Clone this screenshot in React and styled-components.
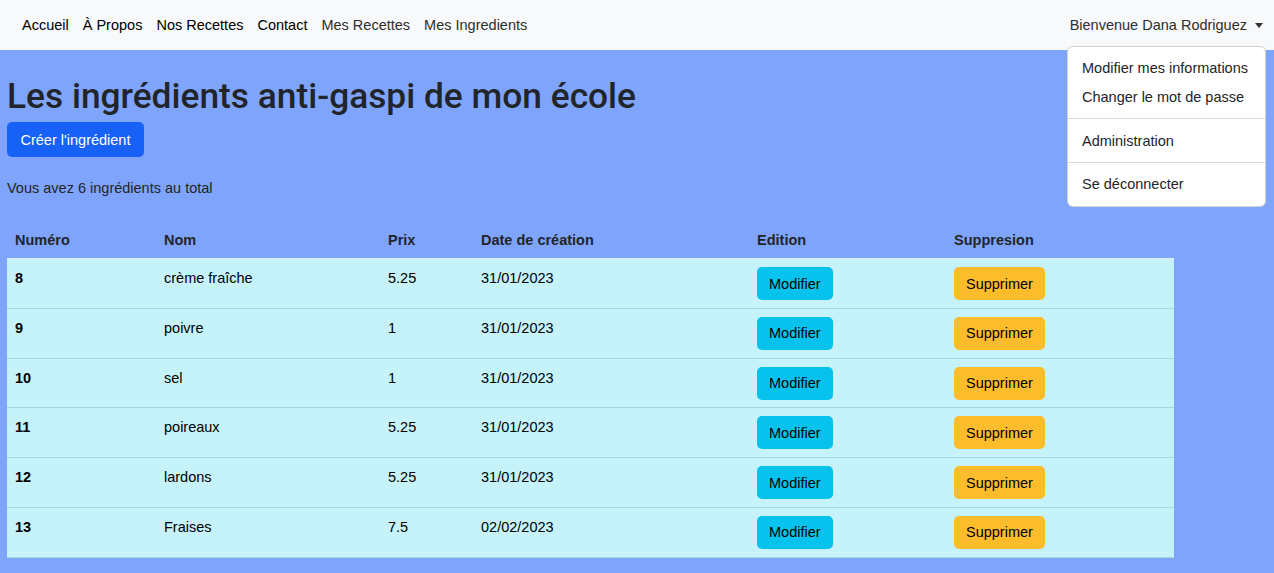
import React from "react";
import styled, { createGlobalStyle } from "styled-components";

const Global = createGlobalStyle`
  html, body { margin: 0; padding: 0; }
  body {
    background: #7fa4fc;
    font-family: "Liberation Sans", Arial, sans-serif;
    color: #212529;
    font-size: 15px;
  }
  * { box-sizing: border-box; }
`;

const NavBar = styled.nav`
  height: 50px;
  background: #f8f9fa;
  display: flex;
  align-items: center;
  justify-content: space-between;
  padding: 0 11px 0 15px;
  position: relative;
`;

const NavList = styled.div`
  display: flex;
  align-items: center;
`;

const NavLink = styled.a`
  padding: 0 7px;
  font-size: 14.5px;
  color: ${(p) => (p.$muted ? "#2e2e2e" : "#000")};
  text-decoration: none;
  white-space: nowrap;
`;

const UserToggle = styled.div`
  display: flex;
  align-items: center;
  gap: 8px;
  font-size: 14.5px;
  color: #2e2e2e;
`;

const Caret = styled.span`
  width: 0;
  height: 0;
  border-left: 4.5px solid transparent;
  border-right: 4.5px solid transparent;
  border-top: 5px solid #333;
`;

const Menu = styled.div`
  position: absolute;
  top: 46px;
  right: 8px;
  width: 199px;
  background: #fff;
  border: 1px solid rgba(0,0,0,0.175);
  border-radius: 6px;
  padding: 7px 0;
  z-index: 10;
`;

const MenuItem = styled.div`
  padding: 6px 14px;
  font-size: 14.5px;
  color: #212529;
  line-height: 17px;
  white-space: nowrap;
`;

const Divider = styled.hr`
  margin: 6px 0 7.5px;
  border: 0;
  border-top: 1px solid rgba(0,0,0,0.15);
`;

const Main = styled.main`
  padding: 0 7px;
`;

const Title = styled.h1`
  margin: 23px 0 0;
  font-family: Roboto, "Liberation Sans", sans-serif;
  font-size: 35.3px;
  font-weight: 500;
  line-height: 46px;
  color: #212529;
`;

const PrimaryButton = styled.button`
  margin-top: 3px;
  height: 35px;
  padding: 0 13.5px;
  background: #1761f6;
  border: none;
  border-radius: 5px;
  color: #fff;
  font-family: inherit;
  font-size: 14.5px;
`;

const Count = styled.p`
  margin: 23px 0 0;
  font-size: 14.5px;
  line-height: 17px;
`;

const Table = styled.table`
  margin-top: 26px;
  width: 1167px;
  border-collapse: collapse;
  font-size: 14.5px;
`;

const Th = styled.th`
  text-align: left;
  font-weight: 700;
  padding: 8px 8px 9px;
  line-height: 18px;
  width: ${(p) => p.$w}px;
  color: #212529;
`;

const Row = styled.tr`
  background: #c6f2fa;
  border-top: 1px solid ${(p) => (p.$first ? "#e8eef6" : "#a9d7e0")};
  &:last-child { border-bottom: 1px solid #a9d7e0; }
`;

const Td = styled.td`
  padding: 8px 8px 7.8px;
  vertical-align: top;
  line-height: 22px;
  color: #000;
  font-weight: ${(p) => (p.$bold ? 700 : 400)};
`;

const ActionButton = styled.button`
  display: block;
  height: 33px;
  padding: 0 12px;
  border: none;
  border-radius: 5px;
  background: ${(p) => (p.$variant === "warn" ? "#fdbc2c" : "#06c2ec")};
  color: #000;
  font-family: inherit;
  font-size: 14.5px;
`;

const rows = [
  ["8", "crème fraîche", "5.25", "31/01/2023"],
  ["9", "poivre", "1", "31/01/2023"],
  ["10", "sel", "1", "31/01/2023"],
  ["11", "poireaux", "5.25", "31/01/2023"],
  ["12", "lardons", "5.25", "31/01/2023"],
  ["13", "Fraises", "7.5", "02/02/2023"],
];

export default function App() {
  return (
    <>
      <Global />
      <NavBar>
        <NavList>
          <NavLink>Accueil</NavLink>
          <NavLink>À Propos</NavLink>
          <NavLink>Nos Recettes</NavLink>
          <NavLink>Contact</NavLink>
          <NavLink $muted>Mes Recettes</NavLink>
          <NavLink $muted>Mes Ingredients</NavLink>
        </NavList>
        <UserToggle>
          Bienvenue Dana Rodriguez <Caret />
        </UserToggle>
        <Menu>
          <MenuItem>Modifier mes informations</MenuItem>
          <MenuItem>Changer le mot de passe</MenuItem>
          <Divider />
          <MenuItem>Administration</MenuItem>
          <Divider />
          <MenuItem>Se déconnecter</MenuItem>
        </Menu>
      </NavBar>
      <Main>
        <Title>Les ingrédients anti-gaspi de mon école</Title>
        <PrimaryButton>Créer l'ingrédient</PrimaryButton>
        <Count>Vous avez 6 ingrédients au total</Count>
        <Table>
          <thead>
            <tr>
              <Th $w={149}>Numéro</Th>
              <Th $w={224}>Nom</Th>
              <Th $w={93}>Prix</Th>
              <Th $w={276}>Date de création</Th>
              <Th $w={197}>Edition</Th>
              <Th $w={228}>Suppresion</Th>
            </tr>
          </thead>
          <tbody>
            {rows.map((r, i) => (
              <Row key={r[0]} $first={i === 0}>
                <Td $bold>{r[0]}</Td>
                <Td>{r[1]}</Td>
                <Td>{r[2]}</Td>
                <Td>{r[3]}</Td>
                <Td>
                  <ActionButton>Modifier</ActionButton>
                </Td>
                <Td>
                  <ActionButton $variant="warn">Supprimer</ActionButton>
                </Td>
              </Row>
            ))}
          </tbody>
        </Table>
      </Main>
    </>
  );
}
